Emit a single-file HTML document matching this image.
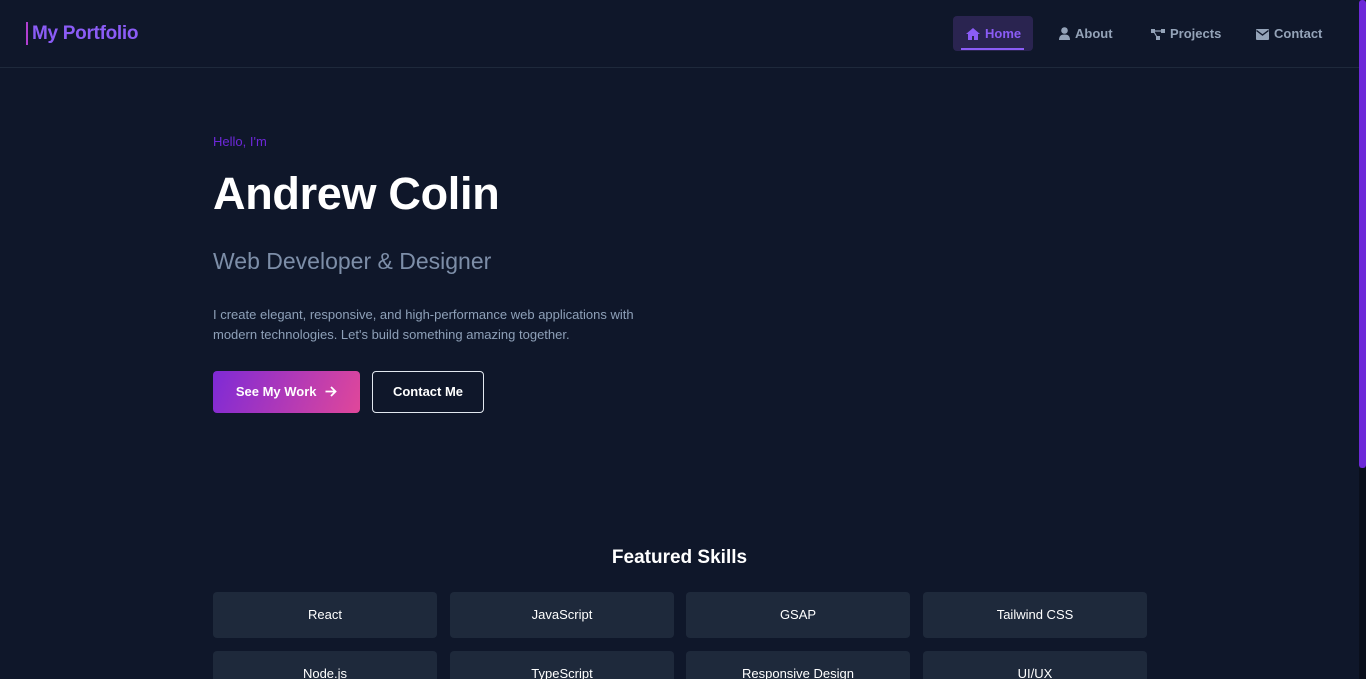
<!DOCTYPE html>
<html><head><meta charset="utf-8"><style>
*{margin:0;padding:0;box-sizing:border-box}
html,body{width:1366px;height:679px;overflow:hidden}
body{background:#0f172a;font-family:"Liberation Sans",sans-serif;position:relative}
.nav{position:absolute;left:0;top:0;width:1359px;height:68px;border-bottom:1px solid #1e293b}
.logo{position:absolute;left:26px;top:22px;height:23px;border-left:2px solid #b13fd0;padding-left:4px;color:#8b5cf6;font-weight:bold;font-size:19px;line-height:24px;letter-spacing:-0.3px}
.menu a{position:absolute;top:16px;height:35px;line-height:35px;font-size:13px;font-weight:bold;color:#94a3b8;text-decoration:none}
.home{left:953px;width:80px;background:#2a2450;border-radius:4px;color:#8b5cf6!important;padding-left:13px}
.home:after{content:"";position:absolute;left:8px;right:9px;bottom:1px;height:2px;background:#8b5cf6}
svg{vertical-align:-2px;margin-right:5px}
.sb{position:absolute;right:0;top:0;width:7px;height:468px;background:#6d28d9;border-radius:3px}
.sbt{position:absolute;right:0;top:468px;width:7px;height:211px;background:#0a0f1c}
.hello{position:absolute;left:213px;top:134px;color:#6d28d9;font-size:13px}
h1{position:absolute;left:213px;top:168px;color:#fff;font-size:45px;font-weight:bold;letter-spacing:-0.3px}
h2{position:absolute;left:213px;top:248px;color:#7d8ea8;font-size:23px;font-weight:normal}
p{position:absolute;left:213px;top:305px;width:455px;color:#8ea0b8;font-size:13px;line-height:20px}
.b1{position:absolute;left:213px;top:371px;width:147px;height:42px;border-radius:4px;background:linear-gradient(110deg,#7e2ad6,#e0479a);color:#fff;font-weight:bold;font-size:13px;line-height:42px;text-align:center}
.b2{position:absolute;left:372px;top:371px;width:112px;height:42px;border-radius:4px;border:1px solid #e2e8f0;color:#fff;font-weight:bold;font-size:13px;line-height:40px;text-align:center}
h3{position:absolute;left:0;width:1359px;top:547px;text-align:center;color:#fff;font-size:19px;font-weight:bold}
.sk{position:absolute;width:224px;height:46px;background:#1e293b;border-radius:4px;color:#fff;font-size:13px;text-align:center;line-height:46px}
</style></head><body>
<div class="nav">
<div class="logo">My Portfolio</div>
<div class="menu">
<a class="home"><svg width="14" height="12" viewBox="0 0 14 12"><path d="M7 0L0 6h2v6h4V8h2v4h4V6h2z" fill="#8b5cf6"/></svg>Home</a>
<a style="left:1059px"><svg width="11" height="13" viewBox="0 0 11 13"><circle cx="5.5" cy="3.5" r="3.3" fill="#94a3b8"/><path d="M0 13c0-4 2-5.5 5.5-5.5S11 9 11 13z" fill="#94a3b8"/></svg>About</a>
<a style="left:1151px"><svg width="14" height="12" viewBox="0 0 14 12"><rect x="0" y="1" width="4" height="4" fill="#94a3b8"/><rect x="10" y="1" width="4" height="4" fill="#94a3b8"/><rect x="5" y="8" width="4" height="4" fill="#94a3b8"/><path d="M3 3h8M3 4l3 5" stroke="#94a3b8" stroke-width="1.2"/></svg>Projects</a>
<a style="left:1256px"><svg width="13" height="11" viewBox="0 0 13 11"><rect width="13" height="11" rx="1" fill="#94a3b8"/><path d="M0.5 1.5l6 4.5 6-4.5" stroke="#0f172a" stroke-width="1.4" fill="none"/></svg>Contact</a>
</div></div>
<div class="sb"></div><div class="sbt"></div>
<div class="hello">Hello, I'm</div>
<h1>Andrew Colin</h1>
<h2>Web Developer &amp; Designer</h2>
<p>I create elegant, responsive, and high-performance web applications with modern technologies. Let's build something amazing together.</p>
<div class="b1">See My Work <svg width="12" height="11" viewBox="0 0 12 11" style="margin:0 0 0 5px;vertical-align:-1px"><path d="M0.5 5.5h10M6 1l4.5 4.5L6 10" stroke="#fff" stroke-width="1.8" fill="none"/></svg></div>
<div class="b2">Contact Me</div>
<h3>Featured Skills</h3>
<div class="sk" style="left:213px;top:592px">React</div>
<div class="sk" style="left:450px;top:592px">JavaScript</div>
<div class="sk" style="left:686px;top:592px">GSAP</div>
<div class="sk" style="left:923px;top:592px">Tailwind CSS</div>
<div class="sk" style="left:213px;top:651px">Node.js</div>
<div class="sk" style="left:450px;top:651px">TypeScript</div>
<div class="sk" style="left:686px;top:651px">Responsive Design</div>
<div class="sk" style="left:923px;top:651px">UI/UX</div>
</body></html>
